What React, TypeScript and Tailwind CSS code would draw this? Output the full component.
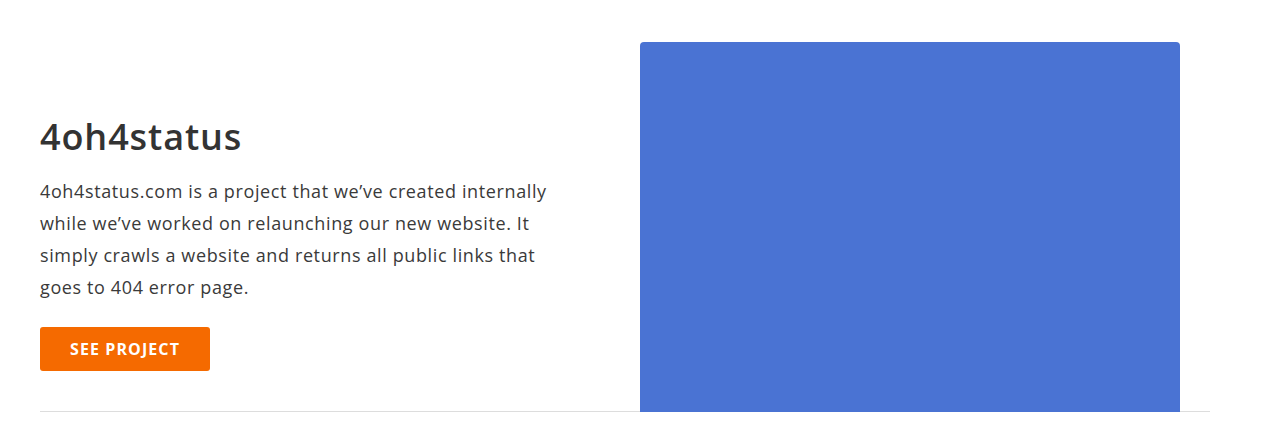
import React from 'react';

const font = { fontFamily: '"Open Sans", "Liberation Sans", sans-serif' };

const ProjectRow: React.FC = () => {
    return (
        <div className="flex w-[1170px] border-b border-[#dddddd]">
            <div className="flex-1 pt-[73px] pr-[40px]">
                <h2 className="text-[36px] leading-[44px] font-semibold text-[#333333] tracking-[0.9px]">4oh4status</h2>
                <p className="mt-[16px] max-w-[535px] text-[18px] leading-[32px] tracking-[0.62px] text-[#3a3a3a]">
                    4oh4status.com is a project that we’ve created internally while we’ve worked on relaunching our new website. It simply crawls a website and returns all public links that goes to 404 error page.
                </p>
                <button className="mt-[24px] h-[44px] w-[170px] rounded-[3px] bg-[#f56a00] text-[16px] font-bold uppercase tracking-[1.1px] text-white">
                    See Project
                </button>
            </div>
            <div className="mr-[30px] -mb-px h-[370px] w-[540px] rounded-t-[4px] bg-[#4a73d3]" />
        </div>
    );
};

export default function App() {
    return (
        <div className="min-h-[434px] bg-white px-[40px] pt-[42px]" style={font}>
            <ProjectRow />
        </div>
    );
}
